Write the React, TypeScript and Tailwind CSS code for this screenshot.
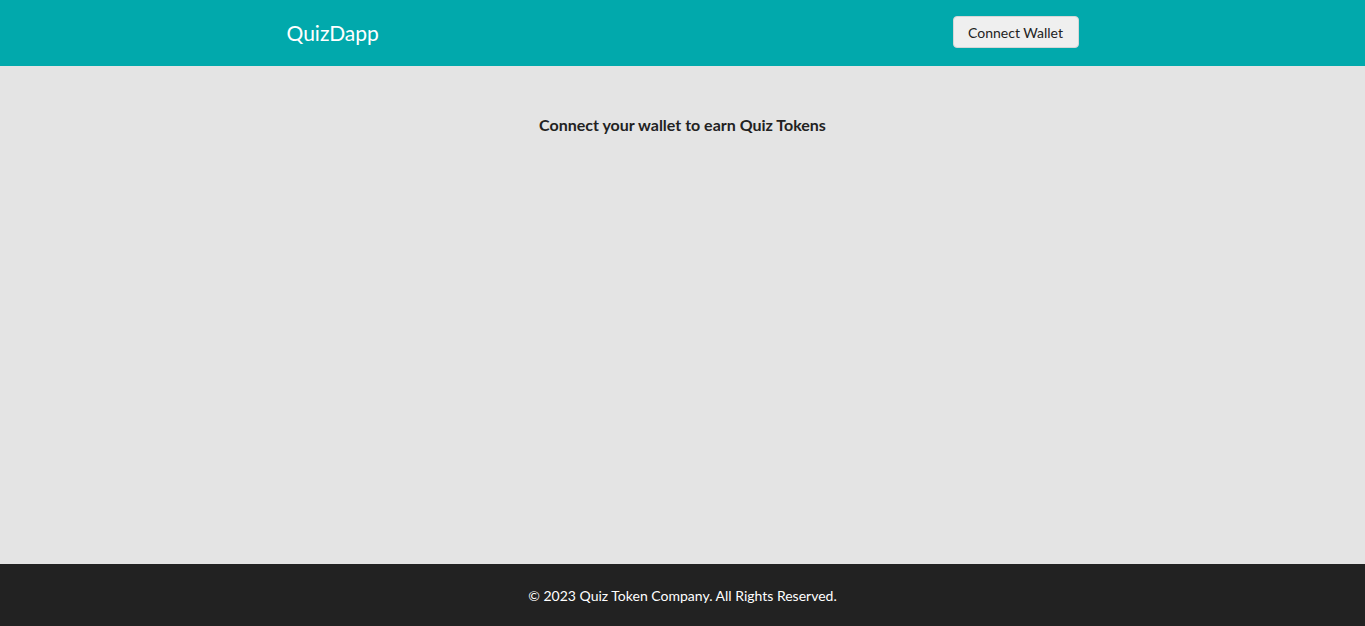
export default function App() {
  return (
    <div className="min-h-screen flex flex-col bg-[#e4e4e4]" style={{ fontFamily: "Lato, 'Open Sans', sans-serif" }}>
      <header className="bg-[#01a9ac] h-[66px] shrink-0">
        <div className="w-[792px] mx-auto h-full flex items-center justify-between pb-[2px]">
          <span className="text-white text-[21px] leading-none">QuizDapp</span>
          <button className="h-[32px] w-[126px] rounded-[4px] bg-[#efefef] border border-[#d6d6d6] text-[14px] text-[#222] flex items-center justify-center">
            Connect Wallet
          </button>
        </div>
      </header>
      <main className="flex-1 pt-[50px] flex flex-col items-center">
        <h2 className="text-[16px] font-bold text-[#222] leading-[18px]">Connect your wallet to earn Quiz Tokens</h2>
      </main>
      <footer className="bg-[#222222] h-[62px] shrink-0 flex items-center justify-center">
        <p className="text-white text-[14px]">© 2023 Quiz Token Company. All Rights Reserved.</p>
      </footer>
    </div>
  );
}
